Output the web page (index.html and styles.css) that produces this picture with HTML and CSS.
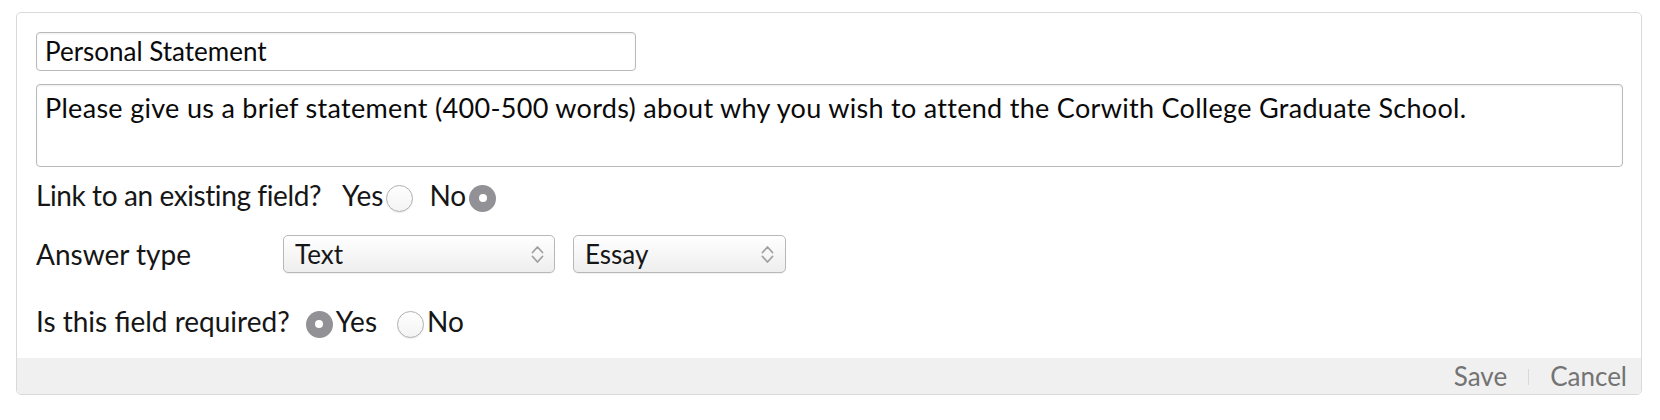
FILE: index.html
```html
<!DOCTYPE html>
<html>
<head>
<meta charset="utf-8">
<link rel="stylesheet" href="styles.css">
</head>
<body>
<div class="card">
  <div class="card-body">
    <input class="title-input" type="text" value="Personal Statement">
    <div class="prompt">Please give us a brief statement (400-500 words) about why you wish to attend the Corwith College Graduate School.</div>
    <div class="row link-row">
      <span class="label link-label">Link to an existing field?</span>
      <span class="opt opt-first">Yes<span class="radio"></span></span>
      <span class="opt opt-second">No<span class="radio checked"></span></span>
    </div>
    <div class="row answer-row">
      <span class="label answer-label">Answer type</span>
      <div class="select select-type">
        <span>Text</span>
        <svg class="chev" width="13" height="21" viewBox="0 0 13 21"><path d="M1.5 8.5 L6.5 3 L11.5 8.5" /><path d="M1.5 12.5 L6.5 18 L11.5 12.5" /></svg>
      </div>
      <div class="select select-sub">
        <span>Essay</span>
        <svg class="chev" width="13" height="21" viewBox="0 0 13 21"><path d="M1.5 8.5 L6.5 3 L11.5 8.5" /><path d="M1.5 12.5 L6.5 18 L11.5 12.5" /></svg>
      </div>
    </div>
    <div class="row required-row">
      <span class="label">Is this field required?</span>
      <span class="opt opt-req-yes"><span class="radio checked"></span>Yes</span>
      <span class="opt opt-req-no"><span class="radio"></span>No</span>
    </div>
  </div>
  <div class="card-footer">
    <span class="action">Save</span>
    <span class="divider"></span>
    <span class="action">Cancel</span>
  </div>
</div>
</body>
</html>
```
FILE: styles.css
```css
html, body {
  margin: 0;
  padding: 0;
  background: #ffffff;
}

body {
  font-family: "Lato", "Open Sans", sans-serif;
  color: #161616;
}

.card {
  margin: 12px 18px 0 16px;
  border: 1px solid #d9d9d9;
  border-radius: 5px;
  overflow: hidden;
}

.card-body {
  padding: 19px 18px 20px 19px;
}

.title-input {
  display: block;
  box-sizing: border-box;
  width: 600px;
  height: 39px;
  margin: 0;
  padding: 0 8px 2px 8px;
  border: 1px solid #b9b9b9;
  border-radius: 4px;
  box-shadow: inset 0 1px 2px rgba(0, 0, 0, 0.08);
  font-family: "Lato", sans-serif;
  font-size: 26px;
  color: #0a0a0a;
  outline: none;
}

.prompt {
  box-sizing: border-box;
  margin-top: 13px;
  height: 83px;
  padding: 6px 8px 0 8px;
  border: 1px solid #b9b9b9;
  border-radius: 4px;
  box-shadow: inset 0 1px 2px rgba(0, 0, 0, 0.08);
  font-size: 27px;
  letter-spacing: 0.3px;
  color: #0a0a0a;
}

.row {
  display: flex;
  align-items: center;
  font-size: 28px;
}

.link-row {
  margin-top: 11px;
  height: 34px;
}

.link-label {
  letter-spacing: -0.4px;
}

.answer-row {
  margin-top: 23px;
  height: 38px;
}

.required-row {
  margin-top: 31px;
  height: 34px;
}

.label {
  white-space: nowrap;
}

.answer-label {
  width: 247px;
  flex: none;
}

.opt {
  display: inline-flex;
  align-items: center;
  white-space: nowrap;
}

.opt-first {
  margin-left: 21px;
}

.opt-second {
  margin-left: 16px;
}

.opt-first .radio,
.opt-second .radio {
  margin-left: 3px;
}

.opt-req-yes {
  margin-left: 16px;
}

.opt-req-no {
  margin-left: 20px;
}

.opt-req-yes .radio,
.opt-req-no .radio {
  margin-right: 3px;
}

.radio {
  display: inline-block;
  box-sizing: border-box;
  width: 27px;
  height: 27px;
  margin-top: 6px;
  border-radius: 50%;
  border: 1px solid #b0b0b0;
  background: linear-gradient(#ffffff, #f3f3f3);
  box-shadow: 0 1px 1px rgba(0, 0, 0, 0.08);
  position: relative;
}

.radio.checked {
  border: none;
  background: #929296;
  box-shadow: none;
}

.radio.checked::after {
  content: "";
  position: absolute;
  left: 50%;
  top: 50%;
  width: 8px;
  height: 8px;
  margin: -4px 0 0 -4px;
  border-radius: 50%;
  background: #ffffff;
}

.select {
  box-sizing: border-box;
  height: 38px;
  display: flex;
  align-items: center;
  justify-content: space-between;
  border: 1px solid #b8b8b8;
  border-radius: 5px;
  background: linear-gradient(#ffffff, #eeeeee);
  box-shadow: 0 1px 1px rgba(0, 0, 0, 0.06);
  font-size: 26px;
  color: #161616;
  padding: 0 10px 0 11px;
}

.select-type {
  width: 272px;
}

.select-sub {
  width: 213px;
  margin-left: 18px;
  padding-right: 11px;
}

.chev {
  flex: none;
}

.chev path {
  fill: none;
  stroke: #a0a0a0;
  stroke-width: 1.8;
  stroke-linecap: round;
  stroke-linejoin: round;
}

.card-footer {
  height: 36px;
  background: #f0f0f0;
  display: flex;
  align-items: center;
  justify-content: flex-end;
  padding-right: 14px;
  font-size: 26px;
  color: #737373;
}

.action {
  line-height: 30px;
}

.divider {
  width: 1px;
  height: 16px;
  margin: 2px 21px 0 21px;
  background: #d8d8d8;
}
```
